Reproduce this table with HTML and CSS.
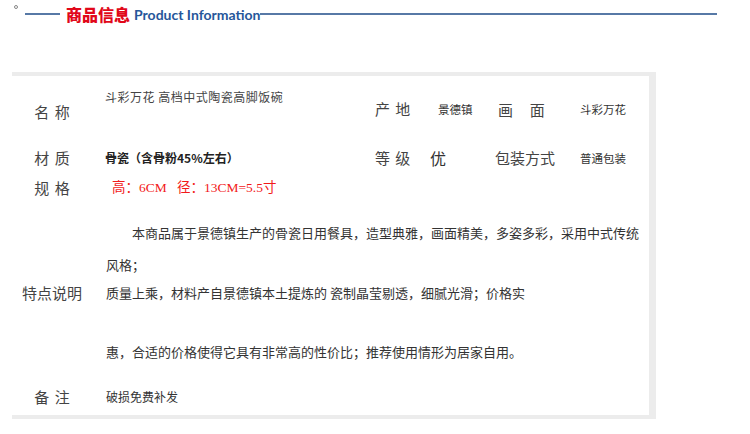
FILE: index.html
```html
<!DOCTYPE html>
<html lang="zh">
<head>
<meta charset="utf-8">
<title>商品信息</title>
<link rel="stylesheet" href="styles.css">
</head>
<body>
<div class="header">
  <span class="dot"></span>
  <span class="rule rule-short"></span>
  <span class="title-cn">商品信息</span>
  <span class="title-en">Product Information</span>
  <span class="rule rule-long"></span>
</div>
<div class="frame">
  <div class="grid6 row-1">
    <div class="label">名&nbsp;称</div>
    <div class="name">斗彩万花 高档中式陶瓷高脚饭碗</div>
    <div class="label mid">产&nbsp;地</div>
    <div class="small c4">景德镇</div>
    <div class="label wide c5">画&nbsp;&nbsp;&nbsp;&nbsp;&nbsp;面</div>
    <div class="small c6">斗彩万花</div>
  </div>
  <div class="grid6 row-2">
    <div class="label">材&nbsp;质</div>
    <div class="material">骨瓷（含骨粉45%左右）</div>
    <div class="label mid">等&nbsp;级</div>
    <div class="grade">优</div>
    <div class="label pack">包装方式</div>
    <div class="small c6">普通包装</div>
  </div>
  <div class="grid2 row-3">
    <div class="label">规&nbsp;格</div>
    <div class="spec">高：6CM&nbsp;&nbsp;&nbsp;径：13CM=5.5寸</div>
  </div>
  <div class="grid2 row-desc">
    <div class="label desc-label">特点说明</div>
    <div class="desc">
      <p class="p1">本商品属于景德镇生产的骨瓷日用餐具，造型典雅，画面精美，多姿多彩，采用中式传统风格；</p>
      <p class="p2">质量上乘，材料产自景德镇本土提炼的 瓷制晶莹剔透，细腻光滑；价格实</p>
      <p class="p3">惠，合适的价格使得它具有非常高的性价比；推荐使用情形为居家自用。</p>
    </div>
  </div>
  <div class="grid2 row-note">
    <div class="label">备&nbsp;注</div>
    <div class="note">破损免费补发</div>
  </div>
</div>
</body>
</html>
```
FILE: styles.css
```css
* { box-sizing: border-box; }
html, body { margin: 0; padding: 0; background: #fff; }
body {
  font-family: "Noto Sans CJK SC", "Noto Sans", sans-serif;
  color: #333;
  width: 750px;
  height: 434px;
  overflow: hidden;
}
p { margin: 0; }

.header {
  display: flex;
  align-items: center;
  height: 28px;
}
.dot {
  align-self: flex-start;
  width: 4px;
  height: 4px;
  margin: 5px 0 0 14px;
  border: 1px solid #888;
  border-radius: 50%;
}
.rule {
  height: 2px;
  background: #5779a6;
}
.rule-short { width: 35px; margin-left: 7px; }
.rule-long { width: 457px; }
.title-cn {
  margin-left: 6px;
  font-size: 16px;
  font-weight: 900;
  color: #e1081a;
  line-height: 20px;
}
.title-en {
  margin-left: 4px;
  font-family: Lato, "Open Sans", sans-serif;
  font-weight: 700;
  font-size: 14px;
  color: #26569a;
  line-height: 20px;
  padding-top: 2px;
}

.frame {
  margin: 44px 0 0 12px;
  width: 644px;
  height: 347px;
  border-top: 4px solid #ececec;
  border-right: 7px solid #ececec;
  border-bottom: 4px solid #ececec;
}

.grid6 {
  display: grid;
  grid-template-columns: 80px 273px 60px 60px 80px 1fr;
  align-items: center;
}
.grid2 {
  display: grid;
  grid-template-columns: 80px 1fr;
}

.label {
  font-size: 15px;
  line-height: 20px;
  color: #444;
  text-align: center;
  word-spacing: 2px;
  white-space: nowrap;
}
.label.mid { text-align: left; padding-left: 10px; }
.label.c5 { text-align: left; padding-left: 13px; word-spacing: 0; }
.label.pack { text-align: left; padding-left: 10px; }

.row-1 { height: 70px; }
.row-1 .label { padding-top: 2px; }
.row-1 .label.mid { padding-top: 0; margin-top: -4px; }
.row-1 .label.c5 { margin-top: -4px; }
.name {
  align-self: start;
  padding: 12px 0 0 13px;
  font-size: 12px;
  letter-spacing: 0.5px;
  line-height: 18px;
  color: #444;
  white-space: nowrap;
}
.small {
  font-size: 11.5px;
  line-height: 16px;
  color: #333;
  white-space: nowrap;
}
.row-1 .small { margin-top: -4px; }
.c4 { padding-left: 13px; }
.c6 { padding-left: 15px; }

.row-2 { height: 24px; }
.material {
  padding-left: 13px;
  font-size: 12px;
  font-weight: 700;
  line-height: 18px;
  color: #222;
  white-space: nowrap;
}
.grade {
  padding-left: 5px;
  font-size: 16px;
  line-height: 20px;
  color: #333;
}

.row-3 { height: 36px; align-items: center; }
.spec {
  padding-left: 20px;
  font-family: "Liberation Serif", "Noto Sans CJK SC", serif;
  font-size: 13.5px;
  line-height: 20px;
  color: #f21a1a;
  white-space: nowrap;
}

.row-desc { height: 158px; }
.desc-label {
  padding-top: 77px;
}
.desc {
  padding: 11px 0 0 14px;
  font-size: 13px;
  color: #333;
}
.p1 { line-height: 32px; text-indent: 26px; }
.p2 { line-height: 24px; }
.p3 { line-height: 24px; margin-top: 35px; }

.row-note { height: 51px; }
.row-note .label { padding-top: 23px; }
.note {
  padding: 24px 0 0 14px;
  font-size: 12px;
  line-height: 18px;
  color: #333;
}
```
